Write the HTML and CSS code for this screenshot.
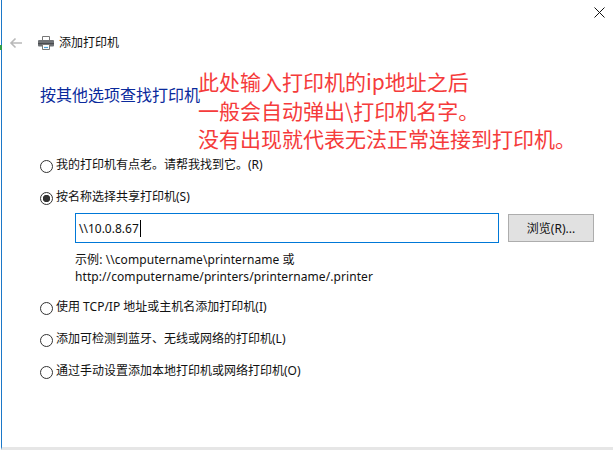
FILE: index.html
```html
<!DOCTYPE html>
<html lang="zh-CN">
<head>
<meta charset="utf-8">
<title>添加打印机</title>
<link rel="stylesheet" href="styles.css">
</head>
<body>
<div class="window">
  <div class="close">
    <svg width="11" height="11" viewBox="0 0 11 11"><path d="M.5.5l10 10M10.500.5l-10 10" stroke="#111" stroke-width="1" fill="none"/></svg>
  </div>
  <header class="titlebar">
    <svg class="back" width="14" height="12" viewBox="0 0 14 12"><path d="M13 6H2M6.500 1.500L2 6l4.500 4.500" stroke="#b9b9b9" stroke-width="1.600" fill="none"/></svg>
    <svg class="printer" width="16" height="16" viewBox="0 0 16 16">
      <path d="M4.500 5V1.500h7V5" fill="#fff" stroke="#777"/>
      <rect x="0" y="5" width="16" height="6.500" rx="1" fill="#6f7276"/>
      <rect x="0" y="8" width="16" height="1.200" fill="#4a4c50"/>
      <path d="M4.500 9.500h7v5h-7z" fill="#fff" stroke="#777"/>
      <path d="M6 12.500h4" stroke="#4fa3d9" stroke-width="1.200"/>
    </svg>
    <span class="title">添加打印机</span>
  </header>
  <main class="content">
    <h1 class="heading">按其他选项查找打印机</h1>
    <div class="option"><span class="radio"></span><span>我的打印机有点老。请帮我找到它。(R)</span></div>
    <div class="option"><span class="radio checked"></span><span>按名称选择共享打印机(S)</span></div>
    <div class="share">
      <div class="input-row">
        <div class="input"><span>\\10.0.8.67</span><span class="caret"></span></div>
        <button class="browse">浏览(R)...</button>
      </div>
      <p class="hint">示例: \\computername\printername 或<br>http://computername/printers/printername/.printer</p>
    </div>
    <div class="option after-share"><span class="radio"></span><span>使用 TCP/IP 地址或主机名添加打印机(I)</span></div>
    <div class="option"><span class="radio"></span><span>添加可检测到蓝牙、无线或网络的打印机(L)</span></div>
    <div class="option"><span class="radio"></span><span>通过手动设置添加本地打印机或网络打印机(O)</span></div>
  </main>
  <div class="note">此处输入打印机的ip地址之后<br>一般会自动弹出\打印机名字。<br>没有出现就代表无法正常连接到打印机。</div>
</div>
</body>
</html>
```
FILE: styles.css
```css
html, body {
  margin: 0;
  height: 100%;
  background: #fff;
}
body {
  overflow: hidden;
  font-family: "Noto Sans", "Noto Sans CJK SC", sans-serif;
  font-size: 12px;
  color: #111;
}
.window {
  position: relative;
  box-sizing: border-box;
  width: 612px;
  height: 450px;
  margin-left: 1px;
  border-left: 1px solid #1c78c8;
  border-bottom: 3px solid #e6e6e6;
  background: #fff;
}
.window::before {
  content: "";
  position: absolute;
  top: 45px;
  left: -2px;
  width: 2px;
  height: 5px;
  background: #2e9e4a;
}
.close {
  position: absolute;
  top: 7px;
  left: 592px;
  line-height: 0;
}
.titlebar {
  display: flex;
  align-items: center;
  height: 16px;
  padding: 35px 0 0 7px;
}
.back { margin-right: 15px; }
.printer { margin-right: 5px; }
.title { line-height: 16px; }
.content { padding: 35px 0 0 38px; }
.heading {
  margin: 0 0 54px;
  font-size: 16px;
  font-weight: 400;
  line-height: 18px;
  color: #0a2a9c;
}
.option {
  display: flex;
  align-items: center;
  gap: 3px;
  height: 14px;
  margin-bottom: 18px;
  line-height: 14px;
  white-space: nowrap;
}
.radio {
  flex: none;
  box-sizing: border-box;
  width: 13px;
  height: 13px;
  margin-top: 2px;
  border: 1px solid #333;
  border-radius: 50%;
  background: #fff;
}
.radio.checked {
  background: radial-gradient(circle, #333 0 3.400px, #fff 4px);
}
.share { margin: -9px 0 0 35px; }
.input-row {
  display: flex;
  align-items: center;
  gap: 9px;
}
.input {
  box-sizing: border-box;
  display: flex;
  align-items: center;
  width: 424px;
  height: 30px;
  padding: 0 3px;
  border: 1px solid #0078d7;
  font-size: 12px;
}
.caret {
  width: 1px;
  height: 17px;
  margin-left: 1px;
  background: #000;
}
.browse {
  box-sizing: border-box;
  width: 86px;
  height: 28px;
  padding: 0;
  border: 1px solid #adadad;
  border-radius: 0;
  background: #e1e1e1;
  color: #111;
  font: inherit;
}
.hint {
  margin: 8px 0 0;
  line-height: 17px;
  letter-spacing: .08px;
}
.option.after-share { margin-top: 15px; }
.note {
  position: absolute;
  top: 67px;
  left: 196px;
  font-family: "Noto Sans CJK SC", sans-serif;
  font-size: 21px;
  line-height: 28.500px;
  color: #f53b3b;
  white-space: nowrap;
}
```
